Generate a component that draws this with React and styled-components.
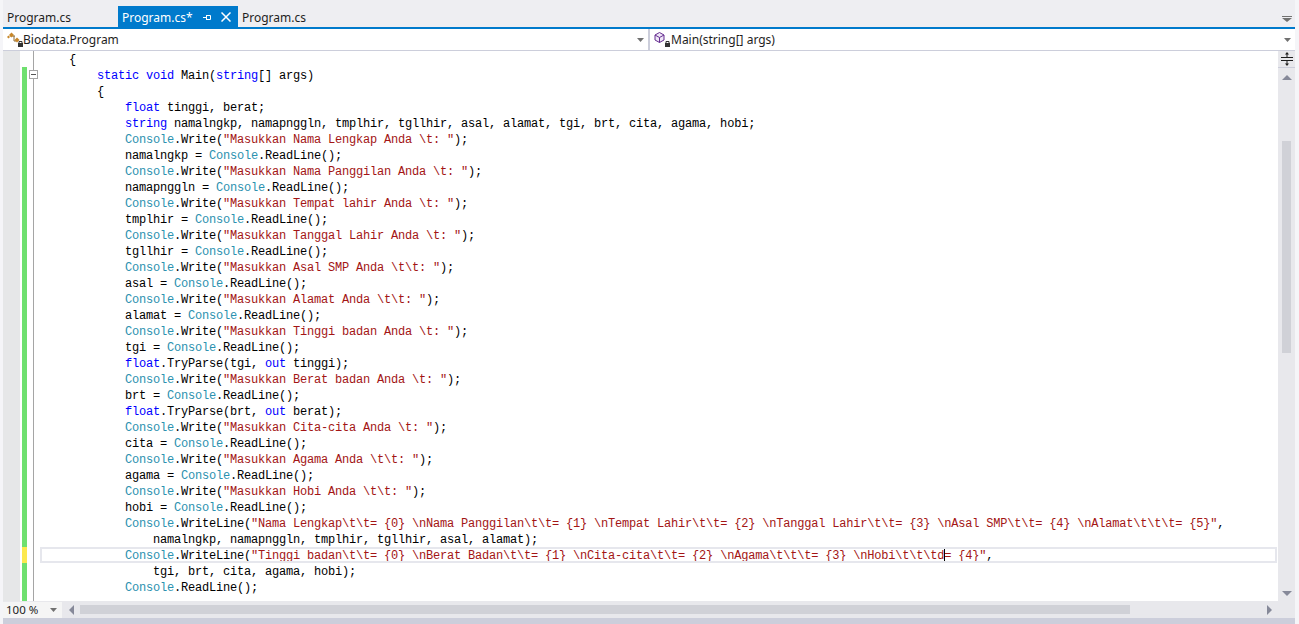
import React from "react";
import styled, { createGlobalStyle } from "styled-components";

const GlobalStyle = createGlobalStyle`
  html, body {
    margin: 0;
    padding: 0;
    height: 100%;
    overflow: hidden;
    background: #f5f5f8;
  }
`;

const CODE = [
  "{",
  "    static void Main(string[] args)",
  "    {",
  "        float tinggi, berat;",
  "        string namalngkp, namapnggln, tmplhir, tgllhir, asal, alamat, tgi, brt, cita, agama, hobi;",
  '        Console.Write("Masukkan Nama Lengkap Anda \\t: ");',
  "        namalngkp = Console.ReadLine();",
  '        Console.Write("Masukkan Nama Panggilan Anda \\t: ");',
  "        namapnggln = Console.ReadLine();",
  '        Console.Write("Masukkan Tempat lahir Anda \\t: ");',
  "        tmplhir = Console.ReadLine();",
  '        Console.Write("Masukkan Tanggal Lahir Anda \\t: ");',
  "        tgllhir = Console.ReadLine();",
  '        Console.Write("Masukkan Asal SMP Anda \\t\\t: ");',
  "        asal = Console.ReadLine();",
  '        Console.Write("Masukkan Alamat Anda \\t\\t: ");',
  "        alamat = Console.ReadLine();",
  '        Console.Write("Masukkan Tinggi badan Anda \\t: ");',
  "        tgi = Console.ReadLine();",
  "        float.TryParse(tgi, out tinggi);",
  '        Console.Write("Masukkan Berat badan Anda \\t: ");',
  "        brt = Console.ReadLine();",
  "        float.TryParse(brt, out berat);",
  '        Console.Write("Masukkan Cita-cita Anda \\t: ");',
  "        cita = Console.ReadLine();",
  '        Console.Write("Masukkan Agama Anda \\t\\t: ");',
  "        agama = Console.ReadLine();",
  '        Console.Write("Masukkan Hobi Anda \\t\\t: ");',
  "        hobi = Console.ReadLine();",
  '        Console.WriteLine("Nama Lengkap\\t\\t= {0} \\nNama Panggilan\\t\\t= {1} \\nTempat Lahir\\t\\t= {2} \\nTanggal Lahir\\t\\t= {3} \\nAsal SMP\\t\\t= {4} \\nAlamat\\t\\t\\t= {5}",',
  "            namalngkp, namapnggln, tmplhir, tgllhir, asal, alamat);",
  '        Console.WriteLine("Tinggi badan\\t\\t= {0} \\nBerat Badan\\t\\t= {1} \\nCita-cita\\t\\t= {2} \\nAgama\\t\\t\\t= {3} \\nHobi\\t\\t\\td= {4}",',
  "            tgi, brt, cita, agama, hobi);",
  "        Console.ReadLine();",
  "",
];

const ACTIVE_ROW = 31;
const CARET_COLUMN = 125;

const Window = styled.div`
  width: 1292px;
  height: 624px;
  margin-left: 3px;
  display: flex;
  flex-direction: column;
  background: #eeeef2;
  overflow: hidden;
`;

const TabStrip = styled.div`
  height: 27px;
  flex: none;
  display: flex;
  align-items: flex-end;
  position: relative;
  border-bottom: 2px solid #007acc;
  box-sizing: content-box;
`;

const Tab = styled.div`
  height: 21px;
  box-sizing: border-box;
  display: flex;
  align-items: center;
  width: ${(p) => p.$width}px;
  padding: 1px 0 0 ${(p) => p.$pad}px;
  background: ${(p) => (p.$active ? "#007acc" : "transparent")};
  color: ${(p) => (p.$active ? "#ffffff" : "#1e1e1e")};
  font: 12px "Noto Sans", sans-serif;
`;

const TabTitle = styled.span`
  flex: 1;
`;

const TabIcon = styled.svg`
  flex: none;
  margin-right: ${(p) => p.$gap}px;
`;

const StripMenu = styled.svg`
  position: absolute;
  right: 3px;
  top: 16px;
`;

const NavBar = styled.div`
  height: 21px;
  flex: none;
  display: flex;
  background: #ffffff;
  border-bottom: 1px solid #cccedb;
`;

const Combo = styled.div`
  width: ${(p) => p.$width}px;
  display: flex;
  align-items: center;
  padding: 0 4px 0 3px;
  box-sizing: border-box;
  color: #1e1e1e;
  font: 12px "Noto Sans", sans-serif;
  ${(p) => p.$divided && "border-right: 2px solid #cccedb;"}
`;

const ComboText = styled.span`
  flex: 1;
`;

const EditorArea = styled.div`
  height: 550px;
  flex: none;
  display: flex;
  overflow: hidden;
`;

const Lines = styled.div`
  flex: 1;
  min-width: 0;
  background: #ffffff;
  overflow: hidden;
`;

const Row = styled.div`
  height: 16px;
  display: flex;
`;

const GlyphMargin = styled.div`
  width: 17px;
  flex: none;
  background: #e6e7e8;
`;

const ChangeCell = styled.div`
  width: 5px;
  flex: none;
  margin-left: 2px;
  background: ${(p) =>
    p.$state === "saved" ? "#6fe06f" : p.$state === "dirty" ? "#fce94f" : "transparent"};
`;

const FoldCell = styled.div`
  width: 12px;
  flex: none;
  position: relative;

  &::before {
    content: "";
    position: absolute;
    left: 6px;
    top: 0;
    bottom: 0;
    width: 1px;
    background: #a5a5a5;
  }
`;

const FoldBox = styled.svg`
  position: absolute;
  left: 2px;
  top: 3px;
`;

const CodeCell = styled.div`
  flex: 1;
  min-width: 0;
  margin-left: 1px;
  margin-right: 1px;
  padding-left: 29px;
  position: relative;
  box-sizing: border-box;
  white-space: pre;
  overflow: hidden;
  font-family: "Liberation Mono", monospace;
  font-size: 12px;
  letter-spacing: -0.2px;
  line-height: ${(p) => (p.$active ? "14px" : "18px")};
  color: #000000;
  ${(p) => p.$active && "border: 2px solid #e6e7ed; padding-left: 27px;"}
`;

const Caret = styled.i`
  position: absolute;
  top: 0;
  bottom: 0;
  width: 1px;
  background: #000000;
`;

const Token = styled.span`
  color: ${(p) => p.$color};
`;

const VerticalBar = styled.div`
  width: 17px;
  flex: none;
  background: #e8e8ec;
  display: flex;
  flex-direction: column;
  align-items: center;
`;

const SplitGrip = styled.div`
  width: 100%;
  height: 17px;
  flex: none;
  display: flex;
  align-items: center;
  justify-content: center;
  border-bottom: 1px solid #cccedb;
  box-sizing: border-box;
`;

const VerticalTrack = styled.div`
  flex: 1;
  display: flex;
  flex-direction: column;
  align-items: center;
  padding: 6px 0 4px;
`;

const VerticalThumb = styled.div`
  width: 9px;
  height: 212px;
  margin-top: 60px;
  margin-bottom: auto;
  background: #d0d1d7;
`;

const BottomBar = styled.div`
  height: 17px;
  flex: none;
  display: flex;
  align-items: center;
  background: #e8e8ec;
`;

const ZoomBox = styled.div`
  width: 59px;
  height: 16px;
  flex: none;
  display: flex;
  align-items: center;
  justify-content: space-between;
  padding: 0 5px 0 3px;
  box-sizing: border-box;
  background: #f5f5f5;
  color: #1e1e1e;
  font: 11.5px "Noto Sans", sans-serif;
`;

const HorizontalTrack = styled.div`
  flex: 1;
  display: flex;
  align-items: center;
  padding: 0 23px 0 7px;
`;

const HorizontalThumb = styled.div`
  width: 1050px;
  height: 9px;
  margin-left: 6px;
  margin-right: auto;
  background: #d0d1d7;
`;

const StatusStrip = styled.div`
  flex: 1;
  background: #cccedb;
`;

const TOKEN_RE = /("[^"]*"?|\b(?:static|void|string|float|out)\b|\bConsole\b)/g;

function tokenColor(part) {
  if (part.startsWith('"')) return "#a31515";
  if (part === "Console") return "#2b91af";
  if (/^(static|void|string|float|out)$/.test(part)) return "#0000ff";
  return null;
}

function CodeText({ text }) {
  return text.split(TOKEN_RE).map((part, i) => {
    const color = tokenColor(part);
    return color ? (
      <Token key={i} $color={color}>
        {part}
      </Token>
    ) : (
      part
    );
  });
}

const Arrow = ({ dir, color = "#868999" }) => {
  const points = {
    up: "0,6 10,6 5,1",
    down: "0,1 10,1 5,6",
    left: "5,0 5,10 0,5",
    right: "0,0 0,10 5,5",
  }[dir];
  const horizontal = dir === "left" || dir === "right";
  return (
    <svg width={horizontal ? 5 : 10} height={horizontal ? 10 : 7}>
      <polygon points={points} fill={color} />
    </svg>
  );
};

const SmallDrop = () => (
  <svg width="7" height="4">
    <polygon points="0,0 7,0 3.5,4" fill="#717171" />
  </svg>
);

const Lock = () => (
  <>
    <rect x="12" y="12" width="5" height="4" fill="#333" />
    <path d="M13 12v-1.500h3V12" stroke="#333" fill="none" />
  </>
);

const ClassIcon = () => (
  <svg width="17" height="17" viewBox="0 0 17 17">
    <path d="M4 5h5M8 5v5h2" stroke="#8a6d3b" fill="none" />
    <path d="M5.500 1.500 8 4 5.500 6.500 3 4z" fill="#c8872a" />
    <path d="M2.500 4.500 4 6 2.500 7.500 1 6z" fill="#c8872a" />
    <path d="M11 6.500 13.500 9 11 11.500 8.500 9z" fill="#c8872a" />
    <Lock />
  </svg>
);

const MethodIcon = () => (
  <svg width="18" height="17" viewBox="0 0 18 17">
    <path d="M6.500 1.500 11 4v5l-4.500 2.500L2 9V4z" fill="#efe6f7" stroke="#652d90" />
    <path d="M2 4l4.500 2.500L11 4M6.500 6.500v5" stroke="#652d90" fill="none" />
    <Lock />
  </svg>
);

function changeState(i) {
  if (i === 0) return "none";
  return i === ACTIVE_ROW ? "dirty" : "saved";
}

export default function App() {
  return (
    <>
      <GlobalStyle />
      <Window>
        <TabStrip>
          <Tab $width={115} $pad={4}>
            <TabTitle>Program.cs</TabTitle>
          </Tab>
          <Tab $active $width={120} $pad={4}>
            <TabTitle>Program.cs*</TabTitle>
            <TabIcon $gap={9} width="9" height="9" viewBox="0 0 9 9">
              <path d="M0 4.500h3M3.500 2v5M3.500 2.500h4v4h-4" stroke="#fff" fill="none" />
            </TabIcon>
            <TabIcon $gap={7} width="10" height="10" viewBox="0 0 10 10">
              <path d="M.5.5l9 9M9.500.5l-9 9" stroke="#fff" strokeWidth="1.500" fill="none" />
            </TabIcon>
          </Tab>
          <Tab $width={100} $pad={4}>
            <TabTitle>Program.cs</TabTitle>
          </Tab>
          <StripMenu width="10" height="6">
            <polygon points="0,2 10,2 5,6" fill="#717171" />
            <rect width="10" height="1" fill="#717171" />
          </StripMenu>
        </TabStrip>

        <NavBar>
          <Combo $width={647} $divided>
            <ClassIcon />
            <ComboText>Biodata.Program</ComboText>
            <SmallDrop />
          </Combo>
          <Combo $width={645}>
            <MethodIcon />
            <ComboText>Main(string[] args)</ComboText>
            <SmallDrop />
          </Combo>
        </NavBar>

        <EditorArea>
          <Lines>
            {CODE.map((line, i) => (
              <Row key={i}>
                <GlyphMargin />
                <ChangeCell $state={changeState(i)} />
                <FoldCell>
                  {i === 1 && (
                    <FoldBox width="9" height="9">
                      <rect x=".5" y=".5" width="8" height="8" fill="#fff" stroke="#a5a5a5" />
                      <path d="M2 4.500h5" stroke="#555" />
                    </FoldBox>
                  )}
                </FoldCell>
                <CodeCell $active={i === ACTIVE_ROW}>
                  <CodeText text={line} />
                  {i === ACTIVE_ROW && <Caret style={{ left: 27 + CARET_COLUMN * 7 }} />}
                </CodeCell>
              </Row>
            ))}
          </Lines>
          <VerticalBar>
            <SplitGrip>
              <svg width="12" height="14" viewBox="0 0 12 14">
                <path d="M0 5.500h12M0 8.500h12" stroke="#1e1e1e" />
                <path d="M6 0 4 2.500h1.500V5h1V2.500H8zM6 14l-2-2.500h1.500V9h1v2.500H8z" fill="#1e1e1e" />
              </svg>
            </SplitGrip>
            <VerticalTrack>
              <Arrow dir="up" />
              <VerticalThumb />
              <Arrow dir="down" />
            </VerticalTrack>
          </VerticalBar>
        </EditorArea>

        <BottomBar>
          <ZoomBox>
            100 %
            <SmallDrop />
          </ZoomBox>
          <HorizontalTrack>
            <Arrow dir="left" />
            <HorizontalThumb />
            <Arrow dir="right" />
          </HorizontalTrack>
        </BottomBar>
        <StatusStrip />
      </Window>
    </>
  );
}
